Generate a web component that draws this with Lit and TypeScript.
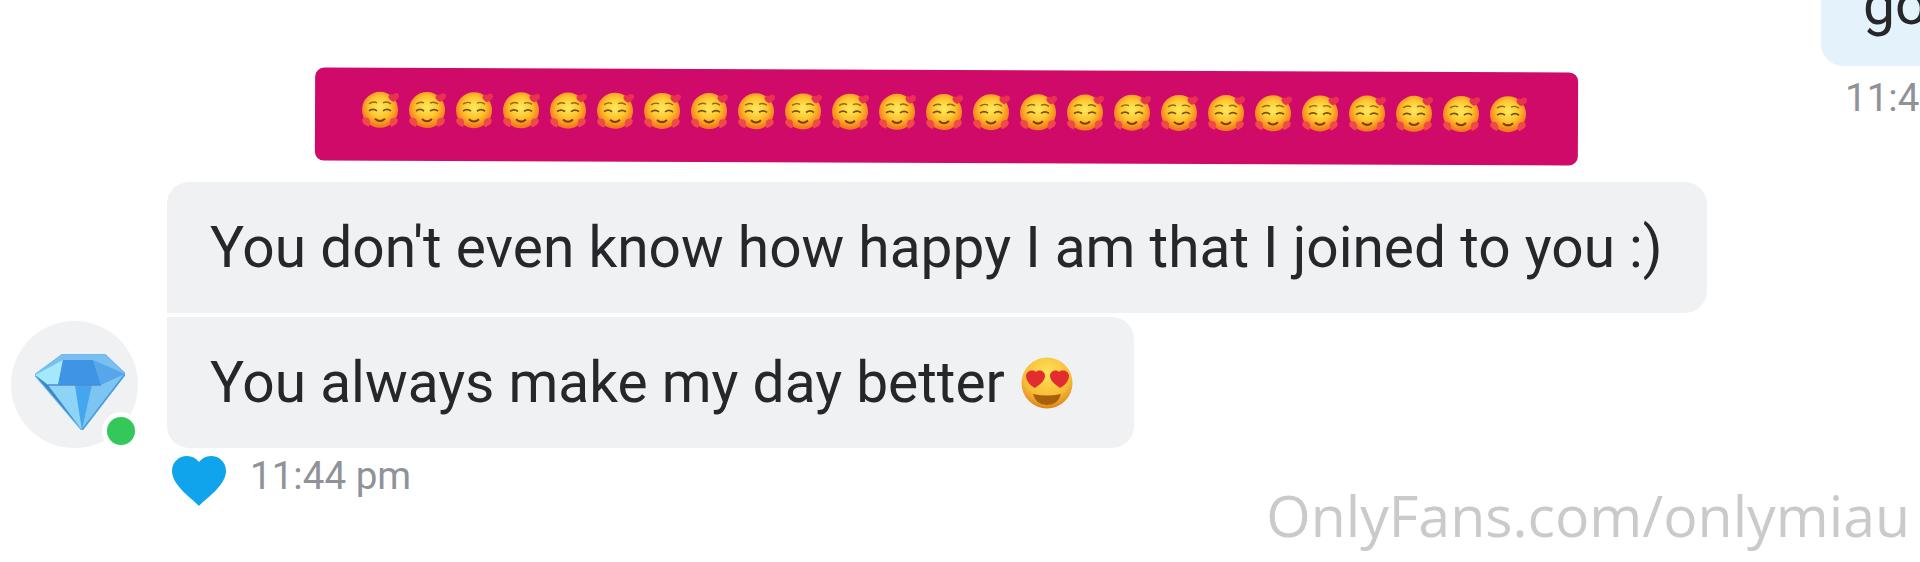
import { LitElement, html, svg, css } from "lit";
import { customElement } from "lit/decorators.js";

const huggingFace = svg`
  <svg class="emoji" viewBox="1 1 38 38">
    <defs>
      <radialGradient id="faceFill" cx="50%" cy="42%" r="54%">
        <stop offset="0" stop-color="#ffe95e" />
        <stop offset="0.55" stop-color="#ffc52f" />
        <stop offset="1" stop-color="#f47a1c" />
      </radialGradient>
    </defs>
    <circle cx="19" cy="20" r="18" fill="url(#faceFill)" />
    <path d="M8 21q4-3 8 0M22 21q4-3 8 0" fill="none" stroke="#6e5210" stroke-width="1.7" />
    <path d="M8 14q4-3 8-1M22 13q4-2 8 1" fill="none" stroke="#8a6c14" stroke-width="1.4" />
    <path d="M14 29q5 4.500 10 0" fill="none" stroke="#7a3f0c" stroke-width="2" />
    <path d="M32 5c1-2.500 6-2.500 6 1 0 3-4 5-6 6-2-1-5-3-4.500-5.500 .5-2.500 3.500-2.500 4.500-1.500z" fill="#e8324f" />
    <path d="M5 28c-3-1-5 2-3 5 1 2 4 3 6 4 1-2 2-5 0-8-1-1-2-1-3-1z" fill="#ee4a48" />
    <path d="M33 28c3-1 5 2 3 5-1 2-4 3-6 4-1-2-2-5 0-8 1-1 2-1 3-1z" fill="#ee4a48" />
  </svg>
`;

const heartEyes = svg`
  <svg class="inline-emoji" viewBox="0 0 52 52">
    <defs>
      <radialGradient id="eyesFill" cx="50%" cy="30%" r="72%">
        <stop offset="0" stop-color="#fde25a" />
        <stop offset="0.65" stop-color="#f7bd35" />
        <stop offset="1" stop-color="#dd7f1c" />
      </radialGradient>
    </defs>
    <circle cx="26" cy="26" r="25.500" fill="url(#eyesFill)" />
    <path d="M15 15c3-3 9-1 9 4 0 5-6 9-10 12-4-2-9-7-9-12 0-5 7-7 10-4z" fill="#e32b30" />
    <path d="M38 15c-3-3-9-1-9 4 0 5 6 9 10 12 4-2 9-7 9-12 0-5-7-7-10-4z" fill="#e32b30" />
    <path d="M12 37q14 3 28 0q-3 11-14 11t-14-11z" fill="#a8600c" />
  </svg>
`;

const diamond = svg`
  <svg class="diamond" viewBox="0 0 90 77">
    <path d="M27 2h43l20 19-43 56L0 22z" fill="#6db8ee" stroke="#6db8ee" stroke-width="2" stroke-linejoin="round" />
    <path d="M27 2h43l20 19-32-14H28L0 22z" fill="#79c0f0" />
    <path d="M0 22 28 7l-5 25H13z" fill="#a4e8fb" />
    <path d="M28 7h30l8 25H23z" fill="#3f94e6" />
    <path d="M58 7l32 14-24 11z" fill="#58a6ea" />
    <path d="M0 22l13 10 34 45z" fill="#3a87c9" />
    <path d="M13 32h27l7 45z" fill="#8ed4f7" />
    <path d="M40 32h17l-10 45z" fill="#45a6f0" />
    <path d="M57 32h9l24-11-43 56z" fill="#7cc5f3" />
    <path d="M90 21 47 77" fill="none" stroke="#4f9bdc" stroke-width="1.500" />
    <path d="M13 32h53" fill="none" stroke="#4a8ed0" stroke-width="1.500" />
  </svg>
`;

const heart = svg`
  <svg class="heart" viewBox="0 0 54 50">
    <path d="M27 50C22 44 0 30 0 15 0 6 7 0 15 0c5 0 9 2 12 6 3-4 7-6 12-6 8 0 15 6 15 15 0 15-22 29-27 35z" fill="#10a4ed" />
  </svg>
`;

@customElement("app-root")
export class AppRoot extends LitElement {
  static styles = css`
    :host {
      display: block;
      width: 1920px;
      height: 562px;
      overflow: hidden;
      background: #fff;
      font-family: Roboto, sans-serif;
      color: #25272b;
    }
    .chat {
      position: relative;
      display: flex;
      flex-direction: column;
      width: 1920px;
      height: 562px;
      overflow: hidden;
    }
    .sent {
      display: flex;
      flex-direction: column;
      align-items: flex-start;
      padding-left: 1821px;
      height: 67px;
    }
    .sent-bubble {
      box-sizing: border-box;
      display: flex;
      align-items: flex-end;
      flex: none;
      width: 140px;
      height: 66px;
      padding: 0 0 33px 42px;
      background: #e3f2fb;
      border-radius: 0 0 0 22px;
      font-size: 57px;
      line-height: 57px;
    }
    .sent-time {
      margin: 10px 0 0 24px;
      color: #8f9399;
      font-size: 38.6px;
      line-height: 44px;
      white-space: nowrap;
    }
    .banner {
      display: flex;
      align-items: center;
      justify-content: center;
      gap: 9px;
      align-self: flex-start;
      box-sizing: border-box;
      width: 1263px;
      height: 93px;
      margin: 3px 0 0 315px;
      padding: 0 3px 9px 0;
      background: #cf0a68;
      border-radius: 9px;
      transform: rotate(0.22deg);
    }
    .emoji {
      width: 38px;
      height: 38px;
      flex: none;
    }
    .thread {
      display: flex;
      align-items: flex-end;
      gap: 29px;
      margin: 19px 0 0 11px;
    }
    .avatar {
      position: relative;
      display: flex;
      align-items: center;
      justify-content: center;
      width: 127px;
      height: 127px;
      flex: none;
      border-radius: 50%;
      background: #f0f1f3;
    }
    .diamond {
      width: 90px;
      height: 77px;
      margin: 14px 0 0 10px;
    }
    .online {
      position: absolute;
      right: -2px;
      bottom: -2px;
      width: 28px;
      height: 28px;
      border: 5px solid #fff;
      border-radius: 50%;
      background: #34c759;
    }
    .bubbles {
      display: flex;
      flex-direction: column;
      align-items: flex-start;
      gap: 4px;
    }
    .bubble {
      display: flex;
      align-items: center;
      gap: 16px;
      box-sizing: border-box;
      height: 131px;
      padding: 0 43px;
      background: #f0f1f3;
      font-size: 56.85px;
      white-space: nowrap;
    }
    .bubble.first {
      border-radius: 22px 22px 22px 0;
      width: 1540px;
    }
    .bubble.last {
      border-radius: 0 22px 22px 22px;
      width: 967px;
    }
    .inline-emoji {
      width: 52px;
      height: 52px;
      flex: none;
    }
    .meta {
      display: flex;
      align-items: center;
      gap: 24px;
      margin: 3px 0 0 172px;
      color: #8f9399;
      font-size: 38.6px;
      line-height: 50px;
    }
    .meta span {
      padding-bottom: 9px;
    }
    .heart {
      width: 54px;
      height: 50px;
    }
    .watermark {
      position: absolute;
      right: 10px;
      bottom: 12px;
      color: #cacaca;
      font-family: "Open Sans", sans-serif;
      font-size: 57.2px;
      line-height: 70px;
      white-space: nowrap;
    }
  `;

  render() {
    const faces = Array.from({ length: 25 }, () => huggingFace);
    return html`
      <div class="chat">
        <div class="sent">
          <div class="sent-bubble">go</div>
          <div class="sent-time">11:44 pm</div>
        </div>
        <div class="banner">${faces}</div>
        <div class="thread">
          <div class="avatar">
            ${diamond}
            <span class="online"></span>
          </div>
          <div class="bubbles">
            <div class="bubble first">You don't even know how happy I am that I joined to you :)</div>
            <div class="bubble last">You always make my day better ${heartEyes}</div>
          </div>
        </div>
        <div class="meta">${heart}<span>11:44 pm</span></div>
        <div class="watermark">OnlyFans.com/onlymiau</div>
      </div>
    `;
  }
}
